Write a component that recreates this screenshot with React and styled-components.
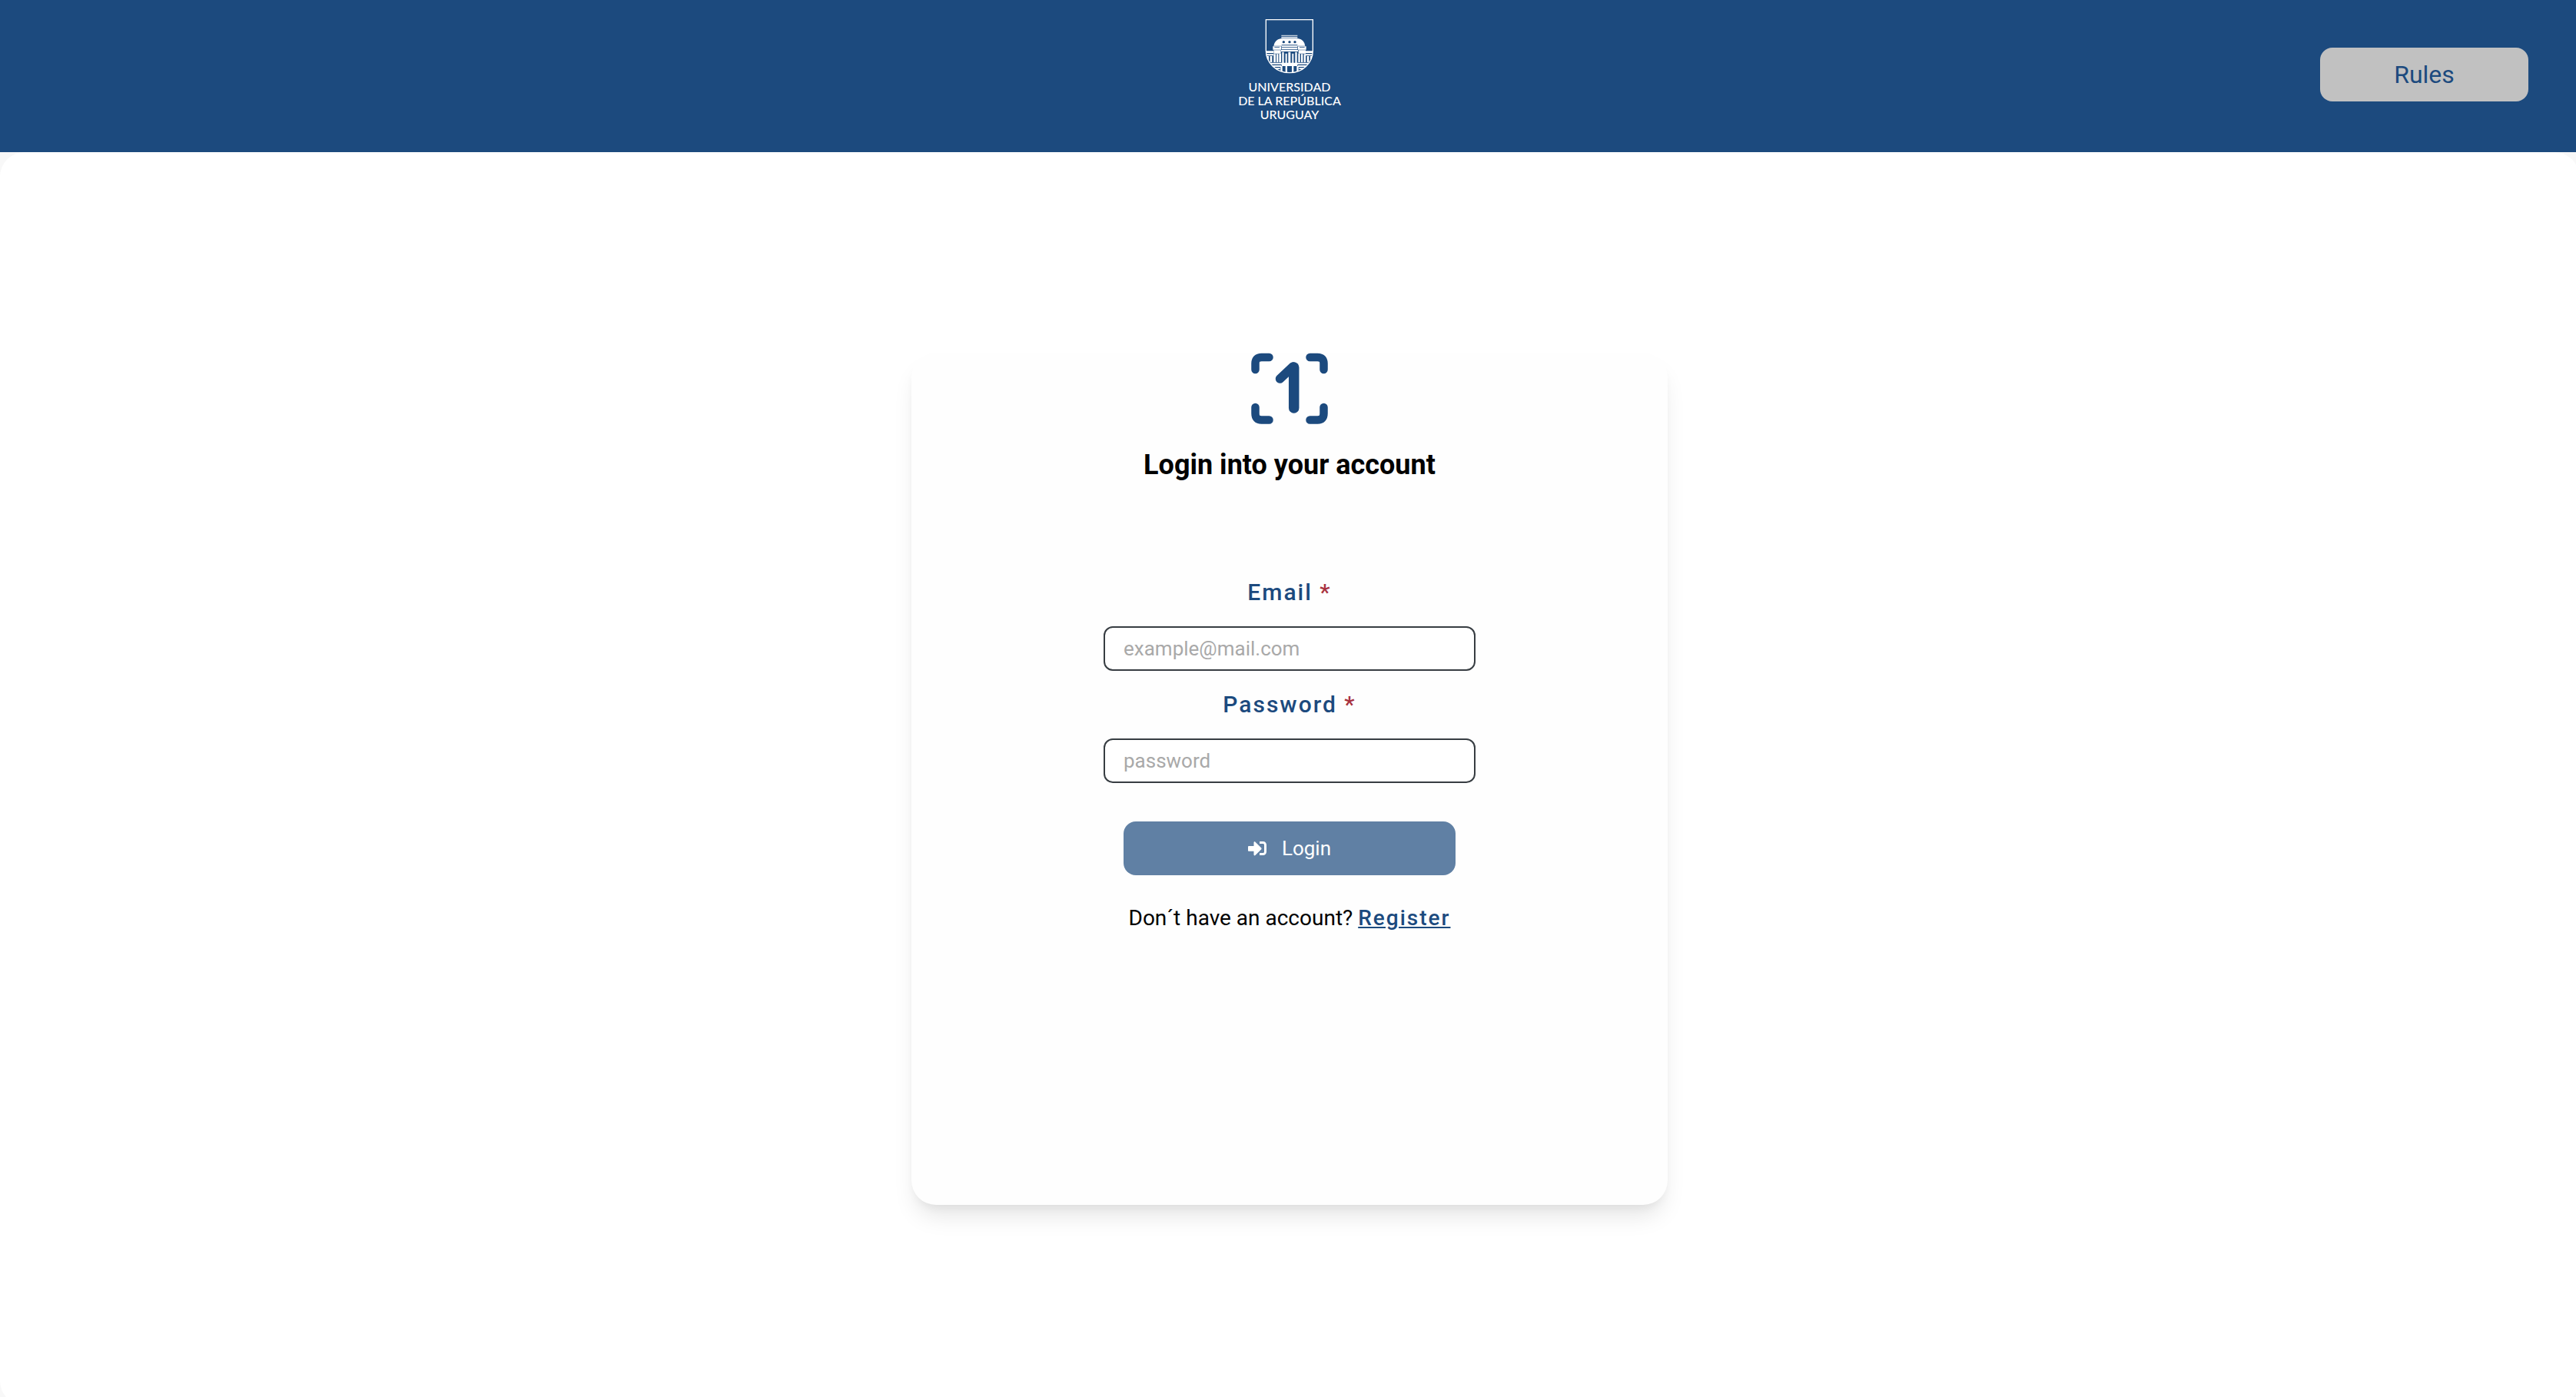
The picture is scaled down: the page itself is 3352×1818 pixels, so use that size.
import React from "react";
import styled, { createGlobalStyle } from "styled-components";
import { FaSignInAlt } from "react-icons/fa";

const blue = "#1c4a7e";

const GlobalStyle = createGlobalStyle`
  *, *::before, *::after { box-sizing: border-box; }
  body {
    margin: 0;
    overflow: hidden;
    background: #f8f8f8;
    color: #000;
    font-family: Roboto, "Liberation Sans", sans-serif;
  }
`;

const Shell = styled.div`
  display: flex;
  flex-direction: column;
  width: calc(100% + 4px);
  height: 100vh;
`;

const Header = styled.header`
  flex: none;
  display: grid;
  grid-template-columns: 1fr auto 1fr;
  align-items: center;
  padding: 24px 66px 28px;
  background: ${blue};
`;

const Brand = styled.a`
  grid-column: 2;
  display: flex;
  flex-direction: column;
  align-items: center;
  height: 146px;
  color: #fff;
  text-decoration: none;
`;

const Shield = styled.svg`
  display: block;
  width: 64px;
  height: 72px;
`;

const BrandName = styled.span`
  display: flex;
  flex-direction: column;
  align-items: center;
  padding-top: 8px;
  font: 500 16px/18px Lato, sans-serif;
`;

const RulesButton = styled.button`
  grid-column: 3;
  justify-self: end;
  width: 271px;
  height: 70px;
  border: 0;
  border-radius: 16px;
  background: #c1c1c1;
  color: ${blue};
  font: 400 32px/38px Roboto, sans-serif;
  cursor: pointer;
`;

const Main = styled.main`
  flex: none;
  display: flex;
  align-items: center;
  justify-content: center;
  height: calc(100vh - 187px);
  border-radius: 32px;
  background: #fff;
`;

const Card = styled.section`
  display: flex;
  flex-direction: column;
  align-items: center;
  width: min(984px, 100%);
  min-height: 68%;
  border-radius: 32px;
  background: #fefefe;
  box-shadow: 0 20px 30px -6px rgba(0, 0, 0, 0.1), 0 8px 12px -4px rgba(0, 0, 0, 0.05);
`;

const Mark = styled.svg`
  display: block;
  width: 100px;
  height: 94px;
`;

const Title = styled.h1`
  margin: 32px 0 0;
  font-size: 36px;
  line-height: 40px;
  font-weight: 700;
`;

const Form = styled.form`
  display: flex;
  flex-direction: column;
  align-items: center;
  gap: 26px;
  width: 484px;
  margin-top: 128px;
`;

const Label = styled.label`
  color: ${blue};
  font-size: 30px;
  line-height: 36px;
  font-weight: 500;
  letter-spacing: 2px;
`;

const Required = styled.span`
  color: #a8323f;
`;

const Field = styled.input`
  width: 100%;
  height: 58px;
  padding: 0 24px;
  border: 2px solid #373d42;
  border-radius: 12px;
  background: #fff;
  font: 400 26px/32px Roboto, sans-serif;
  &::placeholder { color: #a9a9a9; opacity: 1; }
`;

const LoginButton = styled.button`
  display: flex;
  align-items: center;
  justify-content: center;
  gap: 20px;
  width: 432px;
  height: 70px;
  margin-top: 24px;
  border: 0;
  border-radius: 16px;
  background: #6080a4;
  color: #fff;
  font: 400 26px/32px Roboto, sans-serif;
`;

const Hint = styled.p`
  margin: 40px 0 0;
  font-size: 28px;
  line-height: 32px;
`;

const RegisterLink = styled.a`
  color: ${blue};
  font-weight: 500;
  letter-spacing: 2px;
`;

function UniversityShield() {
  return (
    <Shield viewBox="-3 -3 192 216" aria-hidden="true">
      <defs>
        <clipPath id="shield">
          <path d="M1 2H184V122C184 172 143 209 93 209S1 172 1 122Z" />
        </clipPath>
      </defs>
      <g clipPath="url(#shield)" fill="#fff">
        <path d="M61 62H124V67H61ZM61 69H124V76H61Z" opacity=".75" />
        <path d="M58 76H128Q150 80 154 104H31Q36 80 58 76Z" />
        <path d="M28 106H60V119H28ZM126 106H158V119H126ZM62 104H124V118H62Z" />
        <path d="M0 124H30V132H0ZM156 124H186V132H156ZM60 120H126V126H60ZM31 121H59V134H31ZM128 121H156V134H128Z" />
        <path d="M0 136H30V142H0ZM156 136H186V142H156Z" />
        <path d="M4 144H12V168H4ZM17 144H25V168H17ZM161 144H169V168H161ZM174 144H182V168H174Z" />
        <path d="M31 136H39V168H31ZM42 136H49V168H42ZM52 134H60V168H52ZM64 128H71V172H64ZM77 134H83V172H77ZM88 128H97V172H88ZM103 134H109V172H103ZM115 128H122V172H115ZM127 134H134V168H127ZM138 136H145V168H138ZM149 136H156V168H149Z" />
        <path d="M10 170H176V176H10ZM16 180H60V186H16ZM126 180H170V186H126ZM62 176H124V183H62ZM26 190H56V195H26ZM130 190H160V195H130Z" />
        <path d="M58 183H65V210H58ZM77 183H84V210H77ZM102 183H109V210H102ZM121 183H128V210H121Z" />
        <g fill={blue}>
          <circle cx="70" cy="89" r="5" />
          <circle cx="93" cy="89" r="5" />
          <circle cx="114" cy="89" r="5" />
          <path d="M62 100H124V102H62ZM62 109H124V111H62ZM34 109H54V111H34ZM132 109H152V111H132Z" />
        </g>
      </g>
      <path
        d="M1 2H184V122C184 172 143 209 93 209S1 172 1 122Z"
        fill="none"
        stroke="#fff"
        strokeWidth="4"
      />
    </Shield>
  );
}

function AppMark() {
  return (
    <Mark viewBox="0 0 100 94" fill="none" stroke={blue} strokeLinecap="round" aria-hidden="true">
      <path
        d="M5.5 22V14Q5.5 6 13.5 6H23.5M76.5 6H86.5Q94.5 6 94.5 14V22M5.5 71V79Q5.5 87.5 13.5 87.5H23.5M76.5 87.5H86.5Q94.5 87.5 94.5 79V71"
        strokeWidth="10.5"
      />
      <path d="M55.7 72V19" strokeWidth="13.5" />
      <path d="M37.5 34L54.5 18" strokeWidth="11.5" />
    </Mark>
  );
}

export default function App() {
  return (
    <>
      <GlobalStyle />
      <Shell>
        <Header>
          <Brand href="#">
            <UniversityShield />
            <BrandName>
              <span>UNIVERSIDAD</span>
              <span>DE LA REPÚBLICA</span>
              <span>URUGUAY</span>
            </BrandName>
          </Brand>
          <RulesButton type="button">Rules</RulesButton>
        </Header>
        <Main>
          <Card>
            <AppMark />
            <Title>Login into your account</Title>
            <Form>
              <Label htmlFor="email">
                Email <Required>*</Required>
              </Label>
              <Field id="email" type="email" placeholder="example@mail.com" />
              <Label htmlFor="password">
                Password <Required>*</Required>
              </Label>
              <Field id="password" type="password" placeholder="password" />
              <LoginButton type="submit">
                <FaSignInAlt size={24} aria-hidden="true" />
                Login
              </LoginButton>
            </Form>
            <Hint>
              Don´t have an account? <RegisterLink href="#">Register</RegisterLink>
            </Hint>
          </Card>
        </Main>
      </Shell>
    </>
  );
}
